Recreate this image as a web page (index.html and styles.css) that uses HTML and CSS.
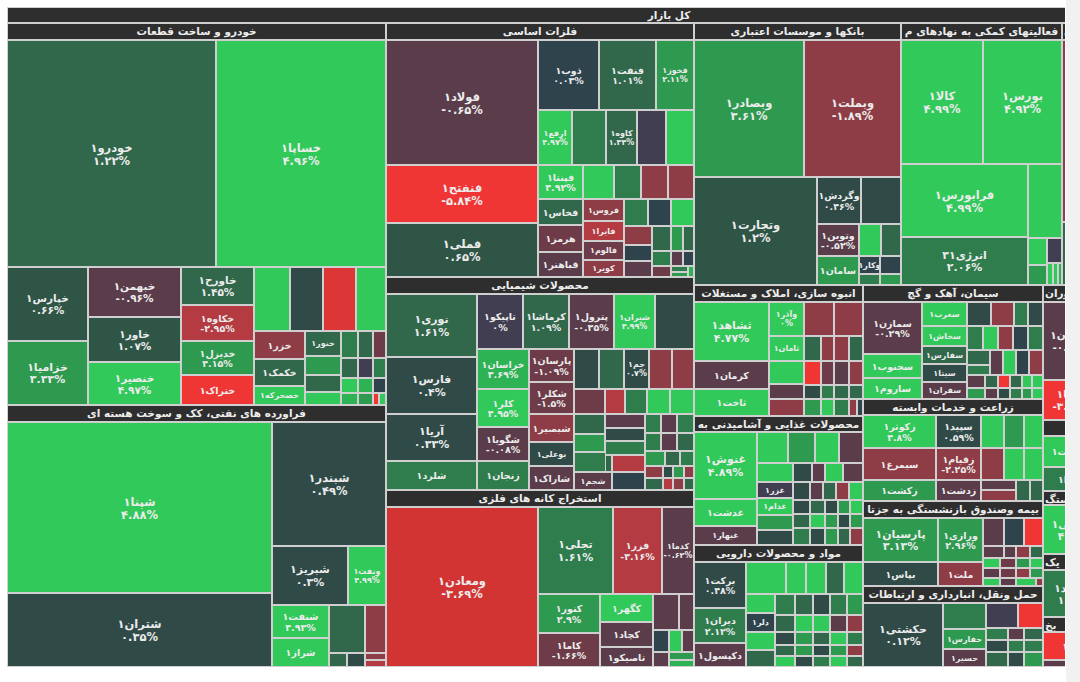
FILE: index.html
```html
<!DOCTYPE html>
<html lang="fa">
<head>
<meta charset="utf-8">
<title>نقشه بازار</title>
<link rel="stylesheet" href="styles.css">
</head>
<body>
<div class="page">
  <div class="map" id="map"></div>
  <div class="gutter"></div>
</div>
<script src="script.js"></script>
</body>
</html>
```

FILE: styles.css
```css
html, body { margin: 0; padding: 0; }
body { background: #ffffff; font-family: "DejaVu Sans", "Noto Sans", sans-serif; }
.page { display: flex; height: 682px; width: 1080px; }
.map {
  position: relative;
  width: 1058px;
  height: 660px;
  margin: 7px 0 0 7px;
  overflow: hidden;
  background: #cdcdcd;
}
.gutter { margin-left: 1px; flex: 1; background: #f1f1f1; }

.t, .hd {
  position: absolute;
  box-sizing: border-box;
  border: 1px solid #cfcfcf;
  overflow: hidden;
}
.t {
  display: flex;
  flex-direction: column;
  align-items: center;
  justify-content: center;
  color: #ececec;
  font-weight: bold;
  font-size: 10.5px;
  line-height: 1.1;
  text-align: center;
  white-space: nowrap;
  padding-top: 2px;
}
.t .nm { direction: rtl; unicode-bidi: isolate; }
.t .pc { direction: ltr; unicode-bidi: isolate; }
.t.lg { font-size: 11.5px; }
.t.md { font-size: 11px; }
.t.sm { font-size: 9.5px; }
.t.xs { font-size: 8px; }

.hd {
  background: #2e2e2e;
  color: #ededed;
  font-weight: bold;
  font-size: 10.5px;
  line-height: 15px;
  direction: rtl;
  text-align: center;
  white-space: nowrap;
}
.hd.hx { direction: ltr; text-align: left; padding-left: 1px; }

.G5 { background: #31c95a; }
.G4 { background: #2eb354; }
.G3 { background: #2e9a4f; }
.G2 { background: #2f7d4c; }
.G1 { background: #31674b; }
.G0 { background: #2f5546; }
.S0 { background: #2f4a47; }
.N0 { background: #2f434d; }
.P0 { background: #403e50; }
.R1 { background: #5a3c4a; }
.R2 { background: #6e3c48; }
.R3 { background: #8e3c45; }
.R4 { background: #b43b41; }
.R5 { background: #f03535; }
.RM { background: #d23434; }
.RA { background: #dc3636; }
```

FILE: script.js
```js
var T = [
[7,7,1331,23,'H','کل بازار'],
// خودرو
[7,23,386,40,'H','خودرو و ساخت قطعات'],
[7,40,216,267,'G1','خودرو۱','۱.۲۲%','lg'],
[216,40,386,267,'G5','خساپا۱','۴.۹۶%','lg'],
[7,267,88,341,'G0','خپارس۱','۰.۶۶%'],
[7,341,88,405,'G3','خزامیا۱','۳.۳۳%','md'],
[88,267,181,317,'R1','خبهمن۱','-۰.۹۶%'],
[88,317,181,362,'G0','خاور۱','۱.۰۷%'],
[88,362,181,405,'G5','خنصیر۱','۴.۹۷%'],
[181,267,254,305,'G1','خاورح۱','۱.۴۵%'],
[181,305,254,341,'R4','خکاوه۱','-۲.۹۵%','sm'],
[181,341,254,375,'G3','خدیزل۱','۴.۱۵%','sm'],
[181,375,254,405,'R5','ختراک۱','','sm'],
[254,267,290,331,'G5'],[290,267,323,331,'S0'],[323,267,356,331,'RA'],[356,267,386,331,'G5'],
[254,331,305,359,'R3','خزر۱','','sm'],
[254,359,305,386,'G1','خکمک۱','','sm'],
[254,386,305,405,'G5','خصحرکه۱','','xs'],
[305,331,341,356,'G1','خنور۱','','xs'],
[305,356,341,375,'G3'],[305,375,341,392,'G1'],[305,392,341,405,'G5'],
[341,331,358,358,'G2'],[358,331,373,358,'G1'],[373,331,386,358,'R2'],
[341,358,358,378,'G1'],[358,358,373,378,'P0'],[373,358,386,378,'G2'],
[341,378,358,393,'G5'],[358,378,373,393,'G4'],[373,378,386,393,'N0'],
[341,393,358,405,'G4'],[358,393,373,405,'G3'],[373,393,379,405,'R5'],[379,393,386,405,'G5'],
// فراورده های نفتی
[7,405,386,422,'H','فراورده های نفتی، کک و سوخت هسته ای'],
[7,422,272,593,'G5','شپنا۱','۴.۸۸%','lg'],
[7,593,272,667,'S0','شتران۱','۰.۳۵%','lg'],
[272,422,386,546,'S0','شبندر۱','۰.۴۹%','lg'],
[272,546,348,605,'S0','شبریز۱','۰.۳%','md'],
[348,546,386,605,'G5','ونفت۱','۴.۹۹%','xs'],
[272,605,329,638,'G5','شنفت۱','۴.۹۳%','sm'],
[272,638,329,667,'G5','شراز۱','','sm'],
[329,605,365,653,'G1'],[365,605,386,653,'R3'],
[329,653,347,667,'G1'],[347,653,365,667,'S0'],[365,653,386,660,'R3'],[365,660,386,667,'R4'],
// فلزات اساسی
[386,23,694,40,'H','فلزات اساسی'],
[386,40,538,165,'R1','فولاد۱','-۰.۶۵%','lg'],
[386,165,538,223,'R5','فنفتح۱','-۵.۸۴%','lg'],
[386,223,538,277,'G0','فملی۱','۰.۶۵%','lg'],
[538,40,599,110,'N0','ذوب۱','۰.۰۳%','sm'],
[599,40,656,110,'G1','فنفت۱','۱.۰۱%','sm'],
[656,40,694,110,'G3','فخوز۱','۲.۱۱%','xs'],
[538,110,572,165,'G5','ارفع۱','۴.۹۷%','xs'],
[572,110,606,165,'G2'],
[606,110,637,165,'G1','کاوه۱','۱.۳۴%','xs'],
[637,110,666,165,'P0'],[666,110,694,165,'G5'],
[538,165,583,199,'G5','فپنتا۱','۴.۹۲%','sm'],
[583,165,614,199,'G5'],[614,165,641,199,'G2'],[641,165,668,199,'R3'],[668,165,694,199,'R3'],
[538,199,583,225,'G1','فخاس۱','','sm'],
[538,225,583,252,'R2','هرمز۱','','sm'],
[538,252,583,277,'R1','قباهنر۱','','sm'],
[583,199,624,221,'R3','فروس۱','','xs'],
[583,221,624,241,'R4','فایرا۱','','xs'],
[583,241,624,260,'R2','فالوم۱','','xs'],
[583,260,624,277,'R3','کویر۱','','xs'],
[624,199,648,226,'G2'],[648,199,671,226,'N0'],[671,199,694,226,'G5'],
[624,226,652,245,'R3'],[624,245,652,261,'N0'],[624,261,652,277,'R1'],
[652,226,671,251,'G1'],[671,226,683,251,'G3'],[683,226,694,251,'G1'],
[652,251,671,266,'G2'],[671,251,683,266,'R1'],[683,251,694,266,'N0'],
[652,266,671,277,'R2'],[671,266,688,272,'G2'],[671,272,688,277,'G3'],[688,266,694,277,'G4'],
// محصولات شیمیایی
[386,277,694,294,'H','محصولات شیمیایی'],
[386,294,477,357,'G1','نوری۱','۱.۶۱%','md'],
[386,357,477,414,'S0','فارس۱','۰.۴%','md'],
[386,414,477,461,'S0','آریا۱','۰.۳۳%','md'],
[386,461,477,490,'G2','شلرد۱','','sm'],
[477,294,523,349,'P0','تاپیکو۱','۰%','sm'],
[523,294,569,349,'G1','کرماشا۱','۱.۰۹%','sm'],
[569,294,614,349,'R1','پترول۱','-۰.۳۵%','sm'],
[614,294,655,349,'G5','شیران۱','۴.۹۹%','xs'],
[655,294,694,349,'S0'],
[477,349,529,389,'G4','خراسان۱','۳.۶۹%','sm'],
[477,389,529,427,'G5','کلر۱','۴.۹۵%','sm'],
[477,427,529,461,'R1','شگویا۱','-۰.۰۸%','sm'],
[477,461,529,490,'G2','زنجان۱','','sm'],
[529,349,574,382,'R2','پارسان۱','-۱.۰۹%','sm'],
[529,382,574,414,'R2','شکلر۱','-۱.۵%','sm'],
[529,414,574,442,'R3','شبصیر۱','','sm'],
[529,442,574,466,'S0','بوعلی۱','','xs'],
[529,466,574,490,'R1','شاراک۱','','sm'],
[574,349,599,389,'S0'],[599,349,624,389,'G1'],
[624,349,649,389,'S0','جم۱','۰.۷%','xs'],
[649,349,672,389,'R3'],[672,349,694,389,'R3'],
[574,389,605,414,'R2'],[605,389,625,414,'R4'],[625,389,647,414,'G2'],[647,389,670,414,'G5'],[670,389,694,414,'G5'],
[574,414,605,434,'G1'],[574,434,605,452,'G3'],[574,452,612,472,'G2'],
[574,472,612,490,'R1','شجم۱','','xs'],
[605,414,645,428,'R1'],[605,428,645,441,'S0'],[605,441,645,455,'G2'],[612,455,645,472,'R4'],[605,455,612,472,'G1'],
[612,472,645,490,'N0'],
[645,414,661,433,'G2'],[661,414,677,433,'R1'],[677,414,694,433,'G2'],
[645,433,661,451,'G2'],[661,433,677,451,'R1'],[677,433,694,451,'G1'],
[645,451,665,466,'G3'],[665,451,680,466,'G1'],[680,451,694,466,'G2'],
[645,466,663,478,'R3'],[663,466,673,478,'S0'],[673,466,684,478,'G3'],[684,466,694,478,'R3'],
[645,478,663,490,'G1'],[663,478,673,490,'R4'],[673,478,684,490,'R3'],[684,478,694,490,'G1'],
// استخراج کانه های فلزی
[386,490,694,507,'H','استخراج کانه های فلزی'],
[386,507,538,667,'RM','ومعادن۱','-۳.۶۹%','lg'],
[538,507,613,594,'G2','تجلی۱','۱.۶۱%','md'],
[613,507,662,594,'R4','فزر۱','-۳.۱۶%','sm'],
[662,507,694,594,'R1','کدما۱','-۰.۶۲%','xs'],
[538,594,600,633,'G3','کنور۱','۲.۹%','sm'],
[538,633,600,667,'R2','کاما۱','-۱.۶۶%','sm'],
[600,594,653,622,'G5','کگهر۱','','sm'],
[600,622,653,647,'R1','کچاد۱','','sm'],
[600,647,653,667,'R1','تاصیکو۱','','sm'],
[653,594,679,630,'R1'],[679,594,694,630,'R1'],
[653,630,669,652,'N0'],[669,630,682,652,'G5'],[682,630,694,652,'R1'],
[653,652,669,667,'R1'],[669,652,694,660,'G3'],[669,660,694,667,'G4'],
// بانکها
[694,23,901,40,'H','بانکها و موسسات اعتباری'],
[694,40,804,177,'G3','وبصادر۱','۳.۶۱%','lg'],
[804,40,901,177,'R3','وبملت۱','-۱.۸۹%','lg'],
[694,177,817,285,'G0','وتجارت۱','۱.۲%','lg'],
[817,177,861,224,'S0','وگردش۱','۰.۴۶%','sm'],
[861,177,901,224,'S0'],
[817,224,859,256,'R1','وتوین۱','-۰.۵۲%','sm'],
[859,224,881,256,'G5'],[881,224,901,256,'G1'],
[817,256,859,285,'G3','سامان۱','','sm'],
[859,256,880,274,'N0','وکار۱','','xs'],
[880,256,901,274,'N0'],
[859,274,880,285,'G2'],[880,274,901,285,'G3'],
// فعالیتهای کمکی
[901,23,1062,40,'H','فعالیتهای کمکی به نهادهای م'],
[901,40,983,164,'G5','کالا۱','۴.۹۹%','lg'],
[983,40,1062,164,'G5','بورس۱','۴.۹۲%','lg'],
[901,164,1028,237,'G5','فرابورس۱','۴.۹۹%','lg'],
[901,237,1028,285,'G2','انرژی۳۱','۲.۰۶%','md'],
[1028,164,1062,238,'G5'],
[1028,238,1047,265,'G5'],[1047,238,1062,263,'P0'],
[1028,265,1047,285,'G3'],[1047,263,1053,285,'G5'],[1053,263,1058,285,'G5'],[1058,263,1062,285,'G4'],
// sliver
[1062,23,1140,40,'hx','ی'],
[1062,40,1140,222,'R3'],[1062,222,1140,285,'G1'],
// انبوه سازی
[694,285,863,302,'H','انبوه سازی، املاک و مستغلات'],
[694,302,769,361,'G5','ثشاهد۱','۴.۷۷%','md'],
[694,361,769,389,'R1','کرمان۱','','sm'],
[694,389,769,416,'G5','ثاخت۱','','sm'],
[769,302,804,336,'G5','وآذر۱','۰%','xs'],
[769,336,804,361,'G5','ثامان۱','','xs'],
[769,361,804,384,'G5'],[769,384,804,399,'R1'],[769,399,804,416,'R3'],
[804,302,834,336,'R3'],[834,302,863,336,'R3'],
[804,336,821,361,'G1'],[821,336,834,361,'R3'],[834,336,849,361,'R3'],[849,336,863,361,'G1'],
[804,361,821,385,'R5'],[821,361,834,385,'R2'],[834,361,849,385,'R1'],[849,361,863,385,'R3'],
[804,385,821,399,'S0'],[821,385,834,399,'G2'],[834,385,849,399,'G1'],[849,385,863,399,'G1'],
[804,399,821,416,'G3'],[821,399,834,416,'G5'],[834,399,849,416,'G2'],[849,399,857,416,'R3'],[857,399,863,416,'N0'],
// سیمان
[863,285,1043,302,'H','سیمان، آهک و گچ'],
[863,302,922,354,'R1','سمازن۱','-۰.۲۹%','sm'],
[863,354,922,378,'G5','سجنوب۱','','sm'],
[863,378,922,399,'G5','ساروم۱','','sm'],
[922,302,967,326,'G5','سغرب۱','','xs'],
[922,326,967,346,'G5','سخاش۱','','xs'],
[922,346,967,364,'G1','سفارس۱','','xs'],
[922,364,967,382,'S0','سیتا۱','','xs'],
[922,382,967,399,'R1','سفران۱','','xs'],
[967,302,991,326,'S0'],[991,302,1014,326,'R3'],[1014,302,1028,326,'G2'],[1028,302,1043,326,'S0'],
[967,326,983,350,'G2'],[983,326,998,350,'G5'],[998,326,1013,350,'R3'],[1013,326,1028,350,'N0'],[1028,326,1043,350,'G2'],
[967,350,990,365,'G1'],[967,365,990,375,'G2'],[990,350,1003,375,'R1'],[1003,350,1016,375,'G5'],[1016,350,1029,375,'N0'],[1029,350,1043,375,'R3'],
[967,375,985,388,'R1'],[985,375,998,388,'G1'],[998,375,1010,388,'R5'],[1010,375,1022,388,'G1'],[1022,375,1032,388,'G5'],[1032,375,1043,388,'G5'],
[967,388,985,399,'G3'],[985,388,998,399,'R1'],[998,388,1010,399,'S0'],[1010,388,1022,399,'G2'],[1022,388,1032,399,'G3'],[1032,388,1043,399,'G5'],
// زراعت
[863,399,1043,415,'H','زراعت و خدمات وابسته'],
[863,415,936,448,'G5','زکوثر۱','۴.۸%','sm'],
[936,415,981,448,'S0','سپید۱','۰.۵۹%','sm'],
[863,448,936,480,'R3','سیمرغ۱','','sm'],
[936,448,981,480,'R3','زقیام۱','-۲.۲۵%','sm'],
[863,480,936,501,'G3','زکشت۱','','sm'],
[936,480,981,501,'R1','زدشت۱','','sm'],
[981,415,1004,448,'G5'],[1004,415,1024,448,'G3'],[1024,415,1043,448,'G5'],
[981,448,1004,480,'R3'],[1004,448,1024,480,'G5'],[1024,448,1043,480,'G5'],
[981,480,1016,490,'R1'],[981,490,1016,501,'R3'],[1016,480,1030,501,'G1'],[1030,480,1043,501,'G1'],
// بیمه
[863,501,1043,518,'H','بیمه وصندوق بازنشستگی به جزتا'],
[863,518,938,562,'G3','پارسیان۱','۳.۱۳%','md'],
[938,518,983,562,'G3','ورازی۱','۲.۹۶%','sm'],
[863,562,938,586,'S0','بپاس۱','','sm'],
[938,562,983,586,'R3','ملت۱','','sm'],
[983,518,1004,546,'R1'],[1004,518,1024,546,'N0'],[1024,518,1043,546,'R5'],
[983,546,1004,558,'R1'],[1004,546,1016,558,'R1'],[1016,546,1030,558,'R3'],[1030,546,1043,558,'G1'],
[983,558,1000,568,'G5'],[1000,558,1016,568,'R2'],[1016,558,1030,568,'G3'],[1030,558,1043,568,'G5'],
[983,568,1000,578,'R1'],[1000,568,1016,578,'R2'],[1016,568,1030,578,'R3'],[1030,568,1043,578,'G3'],
[983,578,1000,586,'G5'],[1000,578,1016,586,'R1'],[1016,578,1036,586,'G5'],[1036,578,1043,586,'R3'],
// حمل ونقل
[863,586,1043,603,'H','حمل ونقل، انبارداری و ارتباطات'],
[863,603,943,667,'S0','حکشتی۱','۰.۱۲%','md'],
[943,603,986,629,'G2'],
[943,629,986,649,'G3','حفارس۱','','xs'],
[943,649,986,667,'R1','حسیر۱','','xs'],
[986,603,1018,628,'P0'],[1018,603,1043,628,'R5'],
[986,628,1008,640,'G2'],[1008,628,1024,640,'R1'],[1024,628,1043,640,'G1'],
[986,640,1008,652,'S0'],[1008,640,1024,652,'G2'],[1024,640,1043,652,'G2'],
[986,652,1008,667,'G1'],[1008,652,1024,667,'S0'],[1024,652,1043,667,'G3'],
// محصولات غذایی
[694,416,863,432,'H','محصولات غذایی و آشامیدنی به'],
[694,432,757,499,'G5','غنوش۱','۴.۸۹%','md'],
[694,499,757,526,'G5','غدشت۱','','sm'],
[694,526,757,545,'R1','غبهار۱','','xs'],
[757,432,788,463,'G5'],[788,432,815,463,'G3'],[815,432,839,463,'G5'],[839,432,863,463,'R1'],
[757,463,793,482,'G5'],
[757,482,793,498,'P0','غزر۱','','xs'],
[757,498,793,515,'G5','غدام۱','','xs'],
[757,515,793,530,'G3'],[757,530,793,545,'S0'],
[793,463,812,482,'S0'],[812,463,825,482,'R1'],[825,463,843,482,'G5'],[843,463,863,482,'R1'],
[793,482,810,500,'S0'],[810,482,823,500,'R1'],[823,482,836,500,'G1'],[836,482,849,500,'R3'],[849,482,863,500,'G5'],
[793,500,810,514,'S0'],[810,500,825,514,'G1'],[825,500,838,514,'S0'],[838,500,850,514,'G3'],[850,500,863,514,'G5'],
[793,514,810,528,'G1'],[810,514,825,528,'G5'],[825,514,838,528,'G3'],[838,514,850,528,'S0'],[850,514,863,528,'G3'],
[793,528,810,545,'G2'],[810,528,825,545,'S0'],[825,528,838,545,'G3'],[838,528,850,545,'G1'],[850,528,863,545,'R3'],
// دارویی
[694,545,863,562,'H','مواد و محصولات دارویی'],
[694,562,746,608,'S0','برکت۱','۰.۴۸%','sm'],
[694,608,746,643,'G2','دیران۱','۲.۱۲%','sm'],
[694,643,746,667,'R1','دکپسول۱','','sm'],
[746,562,786,594,'G5'],[786,562,806,594,'G5'],[806,562,826,594,'G5'],[826,562,844,594,'G1'],[844,562,863,594,'G5'],
[746,594,775,613,'G5'],[746,613,775,632,'N0','دلر۱','','xs'],[746,632,775,650,'G5'],[746,650,775,667,'G1'],
[775,594,795,615,'G2'],[795,594,813,615,'G1'],[813,594,830,615,'S0'],[830,594,847,615,'G2'],[847,594,863,615,'G3'],
[775,615,795,632,'G1'],[795,615,813,632,'G5'],[813,615,830,632,'G5'],[830,615,847,632,'R1'],[847,615,863,632,'R3'],
[775,632,795,645,'S0'],[795,632,813,645,'G3'],[813,632,830,645,'G1'],[830,632,847,645,'G5'],[847,632,863,645,'G2'],
[775,645,795,656,'G1'],[795,645,813,656,'G3'],[813,645,830,656,'S0'],[830,645,847,656,'G3'],[847,645,863,656,'R3'],
[775,656,795,667,'G5'],[795,656,813,667,'S0'],[813,656,830,667,'G2'],[830,656,847,667,'G5'],[847,656,863,667,'G1'],
// ستون راست
[1043,285,1100,302,'hx','وران'],
[1043,302,1100,380,'R1','پکرمان۱','-۰.۴۳%'],
[1043,380,1100,420,'R5','سینا۱','-۳.۸۱%'],
[1043,420,1100,436,'H',''],
[1043,436,1100,467,'G5','کسرات۱','','sm'],
[1043,467,1100,491,'G2','بکارا۱','','sm'],
[1043,491,1100,505,'hx','ستگ'],
[1043,505,1100,554,'G5','پلاسی۱','۴.۲%'],
[1043,554,1100,570,'hx','یک'],
[1043,570,1100,617,'G2','رنفند۱','۱.۹%'],
[1043,617,1100,632,'hx','بخ'],
[1043,632,1100,660,'R5','لند۱','','sm'],
[1043,660,1100,667,'R1']
];

var map = document.getElementById('map');
T.forEach(function (r) {
  var x1 = r[0], y1 = r[1], x2 = r[2], y2 = r[3], c = r[4];
  var d = document.createElement('div');
  if (c === 'H' || c === 'hx') {
    d.className = 'hd' + (c === 'hx' ? ' hx' : '');
    d.textContent = r[5] || '';
  } else {
    d.className = 't ' + c + (r[7] ? ' ' + r[7] : '');
    if (r[5]) {
      var n = document.createElement('span');
      n.className = 'nm';
      n.textContent = r[5];
      d.appendChild(n);
    }
    if (r[6]) {
      var p = document.createElement('span');
      p.className = 'pc';
      p.textContent = r[6];
      d.appendChild(p);
    }
  }
  d.style.left = (x1 - 7) + 'px';
  d.style.top = (y1 - 7) + 'px';
  d.style.width = (x2 - x1) + 'px';
  d.style.height = (y2 - y1) + 'px';
  map.appendChild(d);
});
```
